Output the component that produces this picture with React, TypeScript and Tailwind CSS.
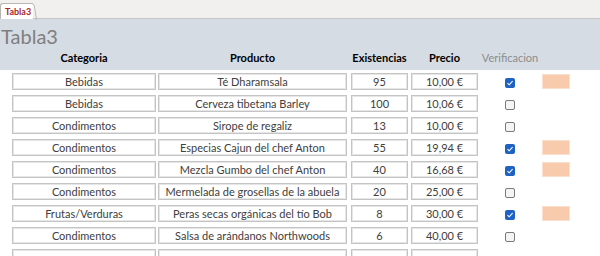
import React from 'react'

type Row = {
  cat: string
  prod: string
  qty: string
  price: string
  ok: boolean
}

const rows: Row[] = [
  { cat: 'Bebidas', prod: 'Té Dharamsala', qty: '95', price: '10,00 €', ok: true },
  { cat: 'Bebidas', prod: 'Cerveza tibetana Barley', qty: '100', price: '10,06 €', ok: false },
  { cat: 'Condimentos', prod: 'Sirope de regaliz', qty: '13', price: '10,00 €', ok: false },
  { cat: 'Condimentos', prod: 'Especias Cajun del chef Anton', qty: '55', price: '19,94 €', ok: true },
  { cat: 'Condimentos', prod: 'Mezcla Gumbo del chef Anton', qty: '40', price: '16,68 €', ok: true },
  { cat: 'Condimentos', prod: 'Mermelada de grosellas de la abuela', qty: '20', price: '25,00 €', ok: false },
  { cat: 'Frutas/Verduras', prod: 'Peras secas orgánicas del tío Bob', qty: '8', price: '30,00 €', ok: true },
  { cat: 'Condimentos', prod: 'Salsa de arándanos Northwoods', qty: '6', price: '40,00 €', ok: false },
  { cat: '', prod: '', qty: '', price: '', ok: false },
]

function Cell({ w, children }: { w: string; children?: React.ReactNode }) {
  return (
    <div
      className={`${w} h-[17px] flex items-center justify-center border border-[#c4c4c4] shadow-[inset_0_0_0_1px_#e6e6e6] bg-white text-[11px] text-[#404040] leading-none whitespace-nowrap overflow-hidden`}
    >
      {children}
    </div>
  )
}

function Check({ on }: { on: boolean }) {
  if (on) {
    return (
      <div className="w-[10px] h-[10px] rounded-[2px] bg-[#1e63c4] flex items-center justify-center">
        <svg width="8" height="8" viewBox="0 0 8 8">
          <path d="M1.5 4.2 L3.2 5.8 L6.6 2.2" fill="none" stroke="white" strokeWidth="1.1" />
        </svg>
      </div>
    )
  }
  return <div className="w-[10px] h-[10px] rounded-[2px] border border-[#7a7a7a] bg-[#f4f4f4]" />
}

export default function App() {
  return (
    <div className="w-[600px] h-[256px] overflow-hidden bg-white" style={{ fontFamily: 'Lato, "Noto Sans", sans-serif' }}>
      {/* tab strip */}
      <div className="h-[19px] bg-[#f1f0ef] border-b border-[#c8c6c4] flex items-end">
        <div className="relative h-[16px] w-[33px] bg-white border-l border-t border-[#b8b6b4] rounded-tl-[3px] -mb-px flex items-center pl-[4px]">
          <span className="text-[9px] font-bold text-[#a4262c] leading-none">Tabla3</span>
          <svg className="absolute -right-[4px] top-[-1px]" width="5" height="17" viewBox="0 0 5 17">
            <path d="M0 0.5 Q2 0.5 2.5 4 L4.5 17" fill="white" stroke="#b8b6b4" strokeWidth="1" />
          </svg>
        </div>
      </div>

      {/* header band */}
      <div className="h-[51px] bg-[#d6dce4] flex flex-col">
        <div className="h-[33px] flex items-center text-[20px] text-[#7f7f7f] leading-none pl-px">Tabla3</div>
        <div className="flex items-center pl-[12px] text-[11px] font-bold text-black leading-none">
          <div className="w-[144px] text-center">Categoria</div>
          <div className="w-[189px] ml-[2px] text-center">Producto</div>
          <div className="w-[57px] ml-[4px] text-center">Existencias</div>
          <div className="w-[67px] ml-[3px] text-center">Precio</div>
          <div className="w-[64px] text-center font-normal text-[#8c8c8c]">Verificacion</div>
        </div>
      </div>

      {/* rows */}
      <div className="flex flex-col gap-[5px] pt-[3px]">
        {rows.map((r, i) => (
          <div key={i} className="flex items-center pl-[12px]">
            <Cell w="w-[144px]">{r.cat}</Cell>
            <div className="ml-[2px]">
              <Cell w="w-[189px]">{r.prod}</Cell>
            </div>
            <div className="ml-[4px]">
              <Cell w="w-[57px]">{r.qty}</Cell>
            </div>
            <div className="ml-[3px]">
              <Cell w="w-[67px]">{r.price}</Cell>
            </div>
            <div className="w-[64px] flex justify-center pt-[3px]">{r.cat && <Check on={r.ok} />}</div>
            {r.ok && <div className="w-[28px] h-[15px] bg-[#f8cbad] border border-[#fbe0cf]" />}
          </div>
        ))}
      </div>
    </div>
  )
}
